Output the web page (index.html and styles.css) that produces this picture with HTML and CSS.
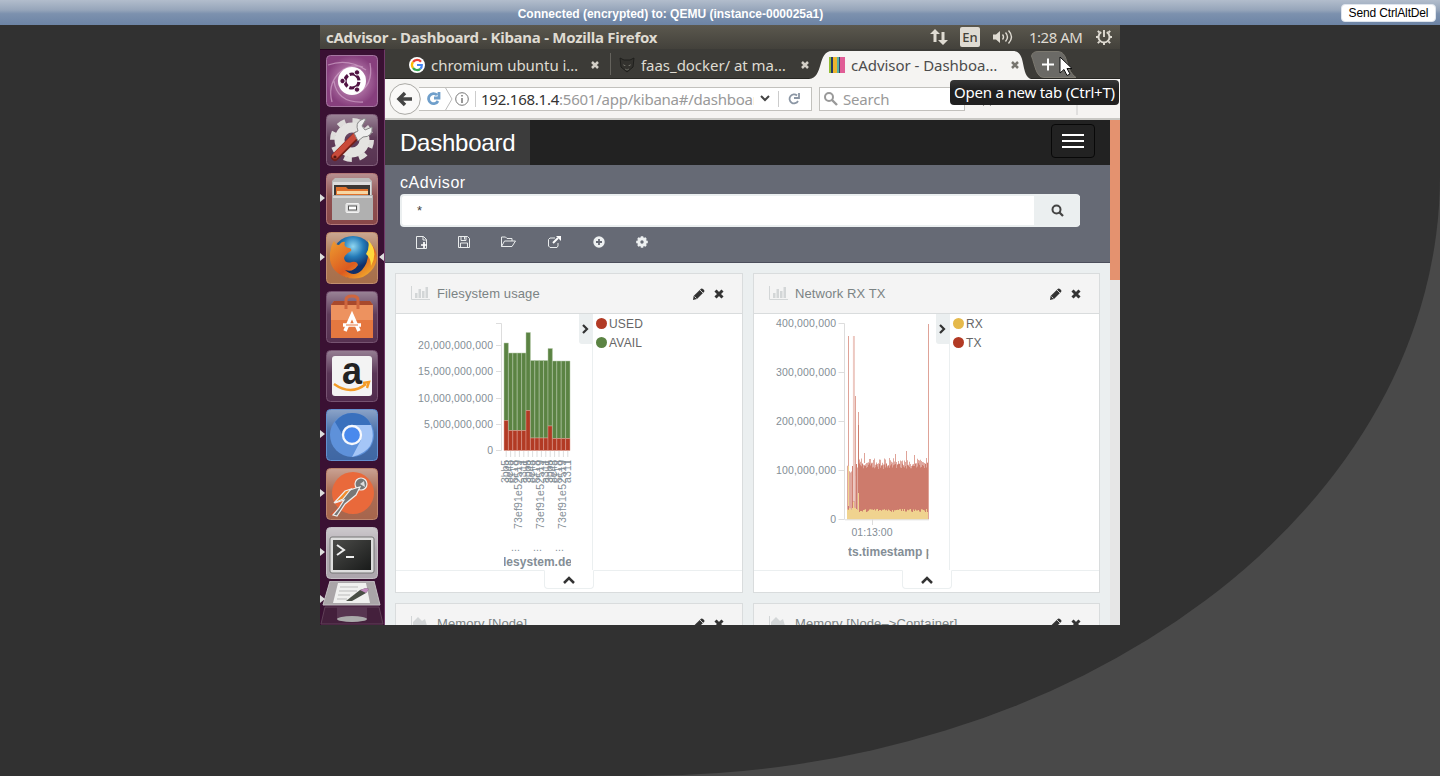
FILE: index.html
```html
<!DOCTYPE html>
<html lang="en">
<head>
<meta charset="utf-8">
<title>QEMU (instance-000025a1)</title>
<link rel="stylesheet" href="styles.css">
</head>
<body>
<header class="vnc-bar"><span class="vnc-status">Connected (encrypted) to: QEMU (instance-000025a1)</span><button class="vnc-button">Send CtrlAltDel</button></header>
<main class="vnc-screen">
<div class="desktop">
  <div class="panel-bar">
    <span class="window-title ubuntu">cAdvisor - Dashboard - Kibana - Mozilla Firefox</span>
    <svg class="net" width="18" height="18" viewBox="0 0 18 18"><path d="M0 6 5 1l5 5H6.500v8h-3V6zM8 12h3.500V4h3v8H18l-5 5z" fill="#dfdbd2"/></svg>
    <span class="lang ubuntu">En</span>
    <svg class="vol" width="20" height="16" viewBox="0 0 20 16"><path d="M0 5.500h3l4-3.500v12l-4-3.500H0z" fill="#dfdbd2"/><path d="M9.500 5.500q2 2.500 0 5M12.500 3.500q4 4.500 0 9M15.500 1.500q6 6.500 0 13" fill="none" stroke="#dfdbd2" stroke-width="1.4"/></svg>
    <span class="clock ubuntu">1:28 AM</span>
    <svg class="cog" width="18" height="18" viewBox="0 0 18 18"><path d="M6.300 4.200a5.500 5.500 0 1 0 5.400 0" fill="none" stroke="#dfdbd2" stroke-width="1.900"/><path d="M9 2v7M4.500 4.500 2.800 2.800M13.500 4.500l1.700-1.700M3.200 9H1M14.800 9H17M4.700 13.300l-1.900 1.900M13.300 13.300l1.900 1.900M9 14.500V17" stroke="#dfdbd2" stroke-width="1.900"/></svg>
  </div>
  <div class="workspace">
    <nav class="launcher">
      <svg viewBox="0 0 64 52" class="app"><defs><linearGradient id="gloss" x2="0" y2="1"><stop stop-color="#fff" stop-opacity=".42"/><stop offset=".45" stop-color="#fff" stop-opacity=".1"/><stop offset="1" stop-color="#fff" stop-opacity=".05"/></linearGradient><radialGradient id="swirl"><stop stop-color="#d3a3c9"/><stop offset="1" stop-color="#873f7d"/></radialGradient></defs><rect x="6.5" y=".5" width="51" height="51" rx="4" fill="url(#swirl)" stroke="#a576a0"/><path d="M12 47C6 25 24 6 43 12M14 26q3 22 29 21M50 8q4 23-14 31M8 10q20-7 38 5" fill="none" stroke="#d6aace" stroke-width="1.3" opacity=".65"/><circle cx="32" cy="26" r="14" fill="#fff"/><circle cx="32" cy="26" r="7" fill="none" stroke="#511343" stroke-width="3.2" stroke-dasharray="12.7 2" stroke-dashoffset="-1"/><g fill="#511343" stroke="#fff"><circle cx="22.5" cy="26" r="2.7"/><circle cx="37" cy="17.4" r="2.7"/><circle cx="37" cy="34.6" r="2.7"/></g></svg>
      <svg viewBox="0 0 64 52" class="app"><rect x="6.5" y=".5" width="51" height="51" rx="4" fill="#4f2848" stroke="#83617c"/><rect x="7" y="1" width="50" height="50" rx="4" fill="url(#gloss)"/><circle cx="32" cy="26" r="19.5" fill="none" stroke="#dedddb" stroke-width="5" stroke-dasharray="8 7.3"/><circle cx="32" cy="26" r="12.5" fill="none" stroke="#e4e3e1" stroke-width="10"/><path d="m15 43 21-21" stroke="#741f19" stroke-width="8" stroke-linecap="round"/><path d="m15 42 20-20" stroke="#c94a3a" stroke-width="6" stroke-linecap="round"/><path d="m34 19 4-2q-3-8 3-11 3-2 5-1l-4 7 3 4 7-3q1 10-9 10l-5 4z" fill="#eee" stroke="#888"/><circle cx="15" cy="43" r="1.6" fill="#551710"/></svg>
      <svg viewBox="0 0 64 52" class="app"><rect x="6.5" y=".5" width="51" height="51" rx="4" fill="#823e3f" stroke="#b37879"/><rect x="7" y="1" width="50" height="50" rx="4" fill="url(#gloss)"/><path d="m12 8 3-3h34l3 3v15H12z" fill="#bbb"/><path d="M13 9h38v13H13z" fill="#ddd"/><path d="M14 12h36v10H14z" fill="#3c3835"/><path d="M16 14h10l2 2h20v7H16z" fill="#df712c"/><path d="M17 18h31v3H17z" fill="#f7d6a3"/><path d="M12 22h41v25H12z" fill="#b0b0b0"/><path d="M13 23h39v2H13z" fill="#d6d6d6"/><rect x="26" y="30.5" width="13" height="9" rx="1" fill="#ddd" stroke="#f2f2f2"/><rect x="28.5" y="33" width="8" height="4" fill="#fff" stroke="#555"/><path d="m0 21 5 4-5 4z" fill="#ddd"/></svg>
      <svg viewBox="0 0 64 52" class="app"><defs><radialGradient id="globe" cy=".25"><stop stop-color="#90d7f1"/><stop offset=".5" stop-color="#247bb8"/><stop offset="1" stop-color="#112f69"/></radialGradient><linearGradient id="fox" x2="1" y2="1"><stop stop-color="#ed9c30"/><stop offset=".55" stop-color="#dc5b20"/><stop offset="1" stop-color="#f8c52f"/></linearGradient></defs><rect x="6.5" y=".5" width="51" height="51" rx="4" fill="#a36741" stroke="#c28e6e"/><rect x="7" y="1" width="50" height="50" rx="4" fill="url(#gloss)"/><circle cx="33" cy="25" r="21" fill="url(#globe)"/><path d="M14 9q2 4 5 4 3-4 6-3-2 5 4 6 3 0 2 3-6 3-7 7 1 6 8 4 5-1 6 3-5 8-13 5 9 8 17 0 7-8 6-19l3 5 1-11q10 13-1 26-10 11-26 6Q8 38 10 21q1-8 4-12" fill="url(#fox)"/><path d="M48 8q11 11 3 26 0-8-5-12 4-6 2-14" fill="#ffd83c"/><path d="m0 21 5 4-5 4zM64 21l-5 4 5 4z" fill="#ddd"/></svg>
      <svg viewBox="0 0 64 52" class="app"><rect x="6.5" y=".5" width="51" height="51" rx="4" fill="#4e2748" stroke="#765371"/><rect x="7" y="1" width="50" height="50" rx="4" fill="url(#gloss)"/><path d="m11 14 3-4h36l3 4v33H11z" fill="#e57840"/><path d="m11 14 3-4h36l3 4z" fill="#a8492c"/><path d="M11 14h42v15H11z" fill="#ed925f"/><path d="M26 18V9q0-4 6-4t6 4v9" fill="none" stroke="#cf663e" stroke-width="3"/><path d="m25 40 7-16 7 16M23 34h18" fill="none" stroke="#fff" stroke-width="3.5"/><path d="M26 34h12" stroke="#e57840"/></svg>
      <svg viewBox="0 0 64 52" class="app"><rect x="6.5" y=".5" width="51" height="51" rx="4" fill="#482044" stroke="#765371"/><rect x="7" y="1" width="50" height="50" rx="4" fill="url(#gloss)"/><rect x="12" y="6" width="40" height="40" rx="3" fill="#f3f3f3"/><text x="22" y="33.500" class="amazon" textLength="20" lengthAdjust="spacingAndGlyphs">a</text><path d="M14 34q17 12 32 0M43 33l6-1-2 6" fill="none" stroke="#f39b27" stroke-width="2.4"/></svg>
      <svg viewBox="0 0 64 52" class="app"><rect x="6.5" y=".5" width="51" height="51" rx="4" fill="#355f9f" stroke="#6390cf"/><rect x="7" y="1" width="50" height="50" rx="4" fill="url(#gloss)"/><circle cx="32" cy="26" r="22" fill="#5e91da"/><path d="M32 16h19q8 25-19 32l9-17z" fill="#a5c6f7"/><path d="M15 13q7-9 17-9 14 0 19 12H32q-9 0-10 9z" fill="#3970bd"/><circle cx="32" cy="26" r="9" fill="#4989ed" stroke="#f6f8fc" stroke-width="2.3"/><path d="m0 21 5 4-5 4z" fill="#ddd"/></svg>
      <svg viewBox="0 0 64 52" class="app"><rect x="6.5" y=".5" width="51" height="51" rx="4" fill="#a25d43" stroke="#bd866f"/><rect x="7" y="1" width="50" height="50" rx="4" fill="url(#gloss)"/><circle cx="33" cy="25" r="21" fill="#e9693b"/><path d="m10 47 10-9-3 8z" fill="#d95834"/><g stroke="#eee" stroke-width="1.2"><circle cx="41" cy="16" r="6" fill="#777"/><path d="m36 20-9 3-12 12 9-3-5 8-6 7 4 1 8-12 11-9 4-8z" fill="#777"/><path d="m31 21-6 2-11 12 9-4z" fill="#f28c2c"/></g><path d="m40 16 4-3 1 6z" fill="#ddd"/><path d="m0 21 5 4-5 4z" fill="#ddd"/></svg>
      <svg viewBox="0 0 64 52" class="app"><defs><linearGradient id="term" x2="1" y2="1"><stop stop-color="#4b4b49"/><stop offset="1" stop-color="#191b1a"/></linearGradient></defs><rect x="6.5" y=".5" width="51" height="51" rx="4" fill="#a8a1a8" stroke="#c5bfc5"/><rect x="7" y="1" width="50" height="50" rx="4" fill="url(#gloss)"/><rect x="10" y="10" width="44" height="36" rx="2" fill="#ddd" stroke="#777"/><path d="M13 13h38v30H13z" fill="url(#term)"/><path d="m17 18 7 5-7 5M26 30h8" fill="none" stroke="#eee" stroke-width="2"/><path d="m0 21 5 4-5 4z" fill="#ddd"/></svg>
      <svg viewBox="0 0 64 44" class="app-fold"><path d="M10 0h44l6 24H3z" fill="#aaa5a8" stroke="#c4bec3"/><path d="M18 2h28l4 20H13z" fill="#f0f0ef"/><path d="M20 6h18M19 10h18M18 14h12M17 18h10" stroke="#bbb"/><path d="m26 20 14-11 6-2 3 1-3 4-14 8z" fill="#494e45"/><path d="m40 9 6-2 3 1-3 4z" fill="#c28bbf"/><path d="m5 26-4 17h62l-4-17z" fill="#44203c" stroke="#604058"/><path d="M17 26v12q15 6 30 0V26" fill="#573550"/><ellipse cx="32" cy="38" rx="15" ry="3" fill="#aaa"/><path d="m0 14 5 4-5 4z" fill="#ddd"/></svg>
    </nav>
    <section class="browser">
      <div class="tabs ubuntu">
        <div class="tab first"><svg width="16" height="16" viewBox="0 0 16 16"><circle cx="8" cy="8" r="8" fill="#fff"/><g fill="none" stroke-width="2.2"><path d="M12 4.8A5 5 0 0 0 4 5" stroke="#ea4335"/><path d="M4 5a5 5 0 0 0 0 6" stroke="#fbbc05"/><path d="M4 11a5 5 0 0 0 7.3.8" stroke="#34a853"/><path d="M11.3 11.8q1.6-1.5 1.5-3.8H8" stroke="#4285f4"/></g></svg><span class="label l1">chromium ubuntu i…</span><svg class="x" width="8" height="8" viewBox="0 0 8 8"><path d="m1 1 6 6m0-6L1 7"/></svg></div>
        <div class="tab second"><svg width="16" height="16" viewBox="0 0 16 16"><path d="m1 1 4 2h6l4-2-1 9-6 5-6-5z" fill="#33322e" stroke="#1f1f1c"/><path d="m4 7 3 2H5zM12 7 9 9h2z" fill="#77776f"/><path d="m6 12 2 1 2-1" stroke="#66665f" fill="none"/></svg><span class="label l2">faas_docker/ at ma…</span><svg class="x" width="8" height="8" viewBox="0 0 8 8"><path d="m1 1 6 6m0-6L1 7"/></svg></div>
        <div class="tab active"><svg class="tab-shape" width="220" height="29" viewBox="0 0 220 29"><path d="M-6 28C9 27 2 0 17 0h181c14 0 7 24 18 28v1H-6z" fill="#f5f4f2"/></svg><svg width="16" height="16" viewBox="0 0 16 16"><path d="M0 0h2v16H0z" fill="#94bd32"/><path d="M2 0h2v16H2z" fill="#253b66"/><path d="M4 0h4v16H4z" fill="#ecb52e"/><path d="M8 0h2v16H8z" fill="#57b2a2"/><path d="M10 0h1v16h-1z" fill="#393d62"/><path d="M11 0h5v16h-5z" fill="#e05d96"/></svg><span class="label l3">cAdvisor - Dashboa…</span><svg class="x" width="8" height="8" viewBox="0 0 8 8"><path d="m1 1 6 6m0-6L1 7"/></svg></div>
        <svg class="plus" width="46" height="27" viewBox="0 0 46 27"><path d="M.5 5Q1.500.5 7 .5h19c6 0 8 4 9.500 9q3 13 9.500 17H13C5 26.500 4 14 .5 5" fill="#6b6a66" stroke="#7b786f"/><path d="M17 7.500v12m-6-6h12" stroke="#fff" stroke-width="2"/></svg>
      </div>
      <div class="toolbar ubuntu">
        <svg class="back" width="34" height="34" viewBox="0 0 34 34"><circle cx="16" cy="17" r="15.3" fill="#faf9f8" stroke="#aaa9a5"/><path d="m16 11-6 6 6 6M11 17h12" fill="none" stroke="#444" stroke-width="3.500"/></svg>
        <div class="url"><svg class="reload-id" width="14" height="14" viewBox="0 0 14 14"><path d="M11 9A5 5 0 1 1 10 3M12 0v6H7" fill="none" stroke="#6f9fcb" stroke-width="2.8"/></svg><svg class="chev" width="8" height="24" viewBox="0 0 8 24"><path d="m0 0 7 12-7 12" fill="none" stroke="#bbb"/></svg><svg width="14" height="14" viewBox="0 0 14 14"><circle cx="7" cy="7" r="6.3" fill="none" stroke="#777"/><path d="M7 6v5M7 3v1.6" stroke="#777" stroke-width="1.5"/></svg><i class="sep s1"></i><span class="address"><b>192.168.1.4</b>:5601/app/kibana#/dashboard</span><svg class="drop" width="10" height="7" viewBox="0 0 10 7"><path d="m1 1 4 4 4-4" fill="none" stroke="#444" stroke-width="2"/></svg><i class="sep s2"></i><svg class="refresh" width="12" height="12" viewBox="0 0 12 12"><path d="M10 8A4.5 4.5 0 1 1 9 2.5M11 0v5H6" fill="none" stroke="#8b96a4" stroke-width="1.8"/></svg></div>
        <div class="search"><svg width="14" height="14" viewBox="0 0 14 14"><circle cx="5" cy="5" r="4" fill="none" stroke="#999" stroke-width="2"/><path d="m8 8 5 5" stroke="#999" stroke-width="2.4"/></svg><span>Search</span></div>
        <svg class="toolbar-icons" width="130" height="32" viewBox="0 0 130 32"><path d="m21 9 2 5 5 .5-4 3.500 1 5-4-3-4 3 1-5-4-3.500 5-.5z" fill="#4d4d4d"/><path d="M36 8v14M111 4v28" stroke="#ccc"/><path d="M46 10h12v11H46z" fill="#444"/></svg>
      </div>
      <div class="page"><div class="kibana">
        <div class="navbar"><span class="brand">Dashboard</span><span class="burger"><i></i><i></i><i></i></span></div>
        <div class="query"><h1>cAdvisor</h1><div class="query-box"><span class="query-text">*</span><span class="query-go"><svg width="13" height="13" viewBox="0 0 13 13"><circle cx="5.5" cy="5.500" r="4" fill="none" stroke="#444" stroke-width="2"/><path d="m8.500 8.500 3.500 3.500" stroke="#444" stroke-width="2.3"/></svg></span></div>
          <div class="actions">
            <svg class="a1" width="12" height="13" viewBox="0 0 12 13"><path d="M.5.5h7l3 3v9H.5zM7 .5v3.500h3.500" fill="none" stroke="#e9eced"/><path d="M8 6v6M5 9h6" stroke="#fff" stroke-width="1.7"/></svg>
            <svg class="a2" width="12" height="12" viewBox="0 0 12 12"><path d="M.5.5h9l2 2v9H.5zM3 .5v4h5v-4M2.500 11.500V7h7v4.500M6.500 1v2.500" fill="none" stroke="#e9eced"/></svg>
            <svg class="a3" width="15" height="12" viewBox="0 0 15 12"><path d="M.5 10.500V1h4l1.500 1.500h5V5M.5 10.500 3.500 5h11L11 10.500z" fill="none" stroke="#e9eced"/></svg>
            <svg class="a4" width="13" height="13" viewBox="0 0 13 13"><path d="M7 2H2L.5 3.500V10L2 11.500h7l1-1.500V7" fill="none" stroke="#e9eced"/><path d="m5 7 5-5" stroke="#fff" stroke-width="2"/><path d="M8 0h5v5z" fill="#fff"/></svg>
            <svg class="a5" width="12" height="12" viewBox="0 0 12 12"><circle cx="6" cy="6" r="5.700" fill="#edf0f1"/><path d="M6 3v6M3 6h6" stroke="#666a75" stroke-width="1.800"/></svg>
            <svg class="a6" width="12" height="12" viewBox="0 0 12 12"><circle cx="6" cy="6" r="3.200" fill="none" stroke="#edf0f1" stroke-width="3"/><path d="M6 .2v2M6 9.800v2M.2 6h2M9.800 6h2M2 2l1.300 1.300M8.700 8.700 10 10M2 10l1.300-1.300M8.700 3.300 10 2" stroke="#edf0f1" stroke-width="2.500"/></svg>
          </div></div>
        <div class="grid" id="grid"></div>
      </div><div class="scroll"><i></i></div></div>
    </section>
  </div>
  <div class="tooltip ubuntu">Open a new tab (Ctrl+T)</div>
  <svg class="cursor" width="14" height="21" viewBox="0 0 14 21"><path d="M1 1v16l4-3.500 3 6 3-1.500-3-5.500h5z" fill="#fff" stroke="#111"/></svg>
</div>
</main>
<script src="charts.js"></script>
</body>
</html>
```
FILE: styles.css
```css
* { box-sizing: border-box; }
body { margin: 0; height: 776px; overflow: hidden; background: #494949; font-family: "Liberation Sans", Arial, sans-serif; }
svg { display: block; flex: none; }
.ubuntu { font-family: "Noto Sans", "Open Sans", sans-serif; }
.vnc-bar { height: 25px; background: linear-gradient(#b2bdcc 0%, #96a5ba 40%, #7c91ae 55%, #6d84a5 100%); display: flex; align-items: center; }
.vnc-status { flex: 1; padding: 2px 0 0 0; text-align: center; font-size: 12px; font-weight: bold; color: #fff; letter-spacing: -.01px; white-space: nowrap; }
.vnc-button { margin-right: 4px; width: 95px; height: 18px; padding: 0; border: 1px solid #dfe5ed; border-radius: 4px; background: #fff; color: #000; font: 12px "Liberation Sans", sans-serif; letter-spacing: -.15px; white-space: nowrap; }
.vnc-screen { height: 751px; background: #313131; border-bottom-right-radius: 800px 600px; display: flex; justify-content: center; align-items: flex-start; }
.desktop { width: 800px; height: 600px; position: relative; overflow: hidden; background: #3c3b37; }
.panel-bar { height: 24px; padding: 0 7px 0 6px; display: flex; align-items: center; background: linear-gradient(#5b584e, #43413b); color: #dfdbd2; }
.window-title { width: 333px; font-size: 15px; line-height: 20px; padding-bottom: 1px; font-weight: bold; letter-spacing: -.26px; white-space: nowrap; }
.net { margin-left: 271px; }
.lang { margin-left: 12px; width: 20px; height: 20px; border-radius: 2px; background: #dfdbd2; color: #454239; font-size: 13px; line-height: 20px; text-align: center; font-weight: 500; }
.vol { margin-left: 13px; }
.clock { margin-left: 16px; width: 54px; font-size: 15px; line-height: 20px; padding-bottom: 1px; letter-spacing: -.5px; white-space: nowrap; }
.cog { margin-left: 12px; }
.workspace { display: flex; height: 576px; }
.launcher { width: 65px; flex: none; padding-top: 5px; display: flex; flex-direction: column; gap: 7px; background: #3a1133; border-right: 1px solid #713a69; border-top: 1px solid #26071f; }
.app { width: 64px; height: 52px; }
.app-fold { width: 64px; height: 44px; margin-top: -5px; }
.amazon { font: bold 38px "Liberation Sans", sans-serif; fill: #222; }
.browser { width: 735px; flex: none; display: flex; flex-direction: column; }
.tabs { height: 30px; display: flex; position: relative; background: #3c3b37; border-bottom: 1px solid #282824; color: #dfdbd2; font-size: 15px; }
.tab { display: flex; align-items: center; height: 31px; position: relative; white-space: nowrap; }
.first { width: 225px; padding-left: 24px; }
.second { width: 210px; padding-left: 9px; }
.second::before { content: ""; position: absolute; left: 0; top: 4px; height: 22px; width: 1px; background: #65635d; }
.active { width: 220px; margin-left: -5px; padding-left: 14px; color: #4c4c4c; }
.active > * { position: relative; }
.tab .tab-shape { position: absolute; left: 0; top: 2px; overflow: visible; }
.label { margin-left: 6px; width: 156px; display: block; overflow: hidden; letter-spacing: -.04px; }
.l1 { width: 160px; }
.x { fill: none; stroke: #d2cec6; stroke-width: 2.5; }
.second .x { margin-left: 4px; }
.active .x { margin-left: 4px; stroke: #77756f; }
.plus { position: absolute; left: 646px; top: 2px; }
.toolbar { height: 41px; background: #f5f4f2; border-bottom: 2px solid #c8c8c4; display: flex; align-items: center; }
.back { margin-left: 4px; z-index: 1; }
.url { width: 393px; height: 24px; margin-left: -4px; border: 1px solid #c2c1bd; border-left: 0; display: flex; align-items: center; background: #fff; overflow: hidden; }
.reload-id { margin-left: 8px; }
.chev { margin: 0 2px 0 4px; }
.sep { width: 1px; height: 16px; background: #ccc; flex: none; }
.s1 { margin-left: 6px; }
.address { width: 273px; flex: none; margin-left: 5px; overflow: hidden; color: #999; font-size: 15px; line-height: 22px; letter-spacing: -.24px; white-space: nowrap; }
.address b { font-weight: 400; color: #333; }
.drop { margin-left: 6px; }
.s2 { margin-left: 8px; }
.refresh { margin-left: 9px; }
.search { width: 146px; height: 24px; margin-left: 7px; padding-left: 4px; display: flex; align-items: center; gap: 5px; background: #fff; border: 1px solid #c2c1bd; color: #999; font-size: 15px; line-height: 22px; letter-spacing: -.2px; }
.toolbar-icons { margin-left: 1px; }
.page { height: 505px; display: flex; }
.kibana { width: 725px; height: 505px; overflow: hidden; background: #ebeff0; }
.navbar { height: 45px; display: flex; justify-content: space-between; background: #222; }
.brand { width: 145px; padding-left: 15px; background: #3c3c3c; color: #fff; font-size: 24px; line-height: 45px; letter-spacing: -.24px; white-space: nowrap; }
.burger { width: 44px; height: 34px; margin: 4px 15px 0 0; border: 1px solid #080808; border-radius: 4px; display: flex; flex-direction: column; align-items: center; gap: 4px; padding-top: 9px; }
.burger i { width: 22px; height: 2px; background: #fff; }
.query { height: 98px; padding: 9px 30px 0 15px; background: #666a75; border-bottom: 1px solid #4b4e5b; }
.query h1 { margin: 0 0 3px; height: 17px; font-size: 16px; font-weight: 400; line-height: 17px; letter-spacing: .55px; color: #fff; }
.query-box { height: 33px; display: flex; justify-content: space-between; border: 2px solid #ebeff0; border-width: 2px 0 2px 2px; border-radius: 4px; background: #fff; }
.query-text { padding: 7px 0 0 15px; font-size: 13px; line-height: 15px; color: #444; }
.query-go { width: 46px; background: #ebeff0; display: grid; place-items: center; }
.actions { display: flex; align-items: center; height: 30px; padding-left: 16px; }
.a2 { margin-left: 30px; }
.a3 { margin-left: 31px; }
.a4 { margin-left: 32px; }
.a5 { margin-left: 32px; }
.a6 { margin-left: 31px; }
.grid { display: grid; grid-template-columns: 348px 347px; gap: 10px; padding: 10px; }
.card { height: 320px; background: #fff; border: 1px solid #d9dcdd; }
.card-head { height: 40px; background: #f4f4f4; border-bottom: 1px solid #d9dcdd; padding: 0 18px 0 15px; display: flex; align-items: center; color: #7b8384; font-size: 13px; letter-spacing: .1px; white-space: nowrap; }
.card-head span { flex: 1; margin-left: 7px; }
.card-head .close { margin-left: 9px; }
.card-body { height: 257px; display: flex; border-bottom: 1px solid #ebeff0; }
.plot { width: 197px; height: 256px; border-right: 1px solid #ebeff0; position: relative; }
.plot.narrow { width: 196px; }
.toggle { position: absolute; right: 0; top: 0; width: 13px; height: 30px; background: #ebeff0; display: grid; place-items: center; border-bottom-left-radius: 3px; }
.legend { padding: 0 0 0 3px; font-size: 12px; color: #666; }
.legend div { height: 19px; display: flex; align-items: center; gap: 2px; letter-spacing: .2px; }
.dot { width: 11px; height: 11px; border-radius: 50%; }
.red { background: #b23a24; }
.green { background: #5b8343; }
.gold { background: #e5b94b; }
.spy { width: 50px; height: 19px; margin: -1px 0 0 148px; border: 1px solid #ebeff0; border-top-color: #fff; border-radius: 0 0 4px 4px; background: #fff; display: grid; place-items: center; }
.plot text { font-family: "Liberation Sans", sans-serif; font-size: 10.5px; fill: #848e96; }
.plot .title { font-size: 12px; font-weight: bold; }
.axis { fill: none; stroke: #ddd; }
.tooltip { position: absolute; left: 630px; top: 55px; width: 169px; height: 25px; border-radius: 4px; background: linear-gradient(#373737, #202020 40%); color: #fff; text-align: center; font-size: 15px; line-height: 25px; letter-spacing: -.22px; white-space: nowrap; }
.cursor { position: absolute; left: 739px; top: 31px; }
.scroll { width: 10px; height: 505px; background: #e6e6e6; }
.scroll i { display: block; height: 160px; background: #e4926f; }
```
FILE: charts.js
```js
const pencil = '<svg width="12" height="12" viewBox="0 0 12 12"><path d="m0 12 .6-4L8 .7Q9 0 10 1l1 1q1 1 0 2L4 11z" fill="#333"/><path d="m7 2 3 3M1.500 8.500l2 2" stroke="#f4f4f4" stroke-width=".8"/></svg>';
const close = '<svg class="close" width="10" height="10" viewBox="0 0 10 10"><path d="m1.500 1.500 7 7m0-7-7 7" stroke="#333" stroke-width="3"/></svg>';
const barIcon = '<svg width="19" height="15" viewBox="0 0 19 15"><path d="M.5 0v13.500H19" fill="none" stroke="#d3d6d7"/><path d="M4 7h2.500v5H4zM7.500 3H10v9H7.500zM11 5h2.500v7H11zM14.500 1H17v11h-2.500z" fill="#d3d6d7"/></svg>';
const areaIcon = '<svg width="19" height="15" viewBox="0 0 19 15"><path d="M.5 0v13.500H19" fill="none" stroke="#d3d6d7"/><path d="M2 13V6l5-5 4 4 3-2 3 10z" fill="#d3d6d7"/></svg>';
const head = (title, icon) => `<div class="card-head">${icon}<span>${title}</span>${pencil}${close}</div>`;
const toggle = '<div class="toggle"><svg width="7" height="10" viewBox="0 0 7 10"><path d="m1 1 4 4-4 4" fill="none" stroke="#333" stroke-width="2.2"/></svg></div>';
const spy = '<div class="spy"><svg width="12" height="8" viewBox="0 0 12 8"><path d="m1 7 5-5 5 5" fill="none" stroke="#333" stroke-width="2.5"/></svg></div>';

function filesystemChart() {
  const bars = [[343, 420.5], [353, 430.5], [353, 430.5], [353, 430.5], [353, 430.5], [332.5, 410.5], [360.5, 438], [360.5, 438], [360.5, 438], [360.5, 438], [348.5, 426], [361, 438.5], [361, 438.5], [361, 438.5], [361, 438.5]];
  const names = ['3bb5', '8e48', '5f18', '73ef91e52519', 'a311'];
  let s = '<path class="axis" d="M496 323.500h5.500v127H496M496 345.500h5M496 371.500h5M496 398.500h5M496 424.500h5"/>';
  [['20,000,000,000', 349, 75], ['15,000,000,000', 375, 75], ['10,000,000,000', 401.500, 75], ['5,000,000,000', 428, 69], ['0', 454, 6]].forEach(l => {
    s += `<text x="493" y="${l[1]}" text-anchor="end" textLength="${l[2]}">${l[0]}</text>`;
  });
  bars.forEach(([top, mid], i) => {
    const x = 504 + i * 4.4;
    s += `<path d="M${x} ${top}h4.400V${mid}h-4.400z" fill="#5b8343" stroke="#b4c9a8" stroke-width=".5"/><path d="M${x} ${mid}h4.400V450.500h-4.400z" fill="#b23a24" stroke="#dc9c90" stroke-width=".5"/><path class="axis" d="M${x + 2.2} 451v6"/>`;
    const name = names[i % 5];
    s += `<text transform="translate(${x + (i % 5 === 3 ? 4.6 : 5)} 460) rotate(-90)" text-anchor="end" textLength="${i % 5 === 3 ? 69 : 23}">${name}</text>`;
  });
  s += '<path d="M504 461.500h67" stroke="#848e96" stroke-width=".8"/>';
  [511, 533, 555].forEach(x => { s += `<text x="${x}" y="551" textLength="9">...</text>`; });
  s += '<svg x="504" y="552" width="67" height="18" viewBox="504 552 67 18"><text class="title" x="503" y="566" textLength="69">lesystem.de</text></svg>';
  return `<svg width="196" height="256" viewBox="396 314 196 256">${s}</svg>`;
}

function networkChart() {
  let s = '<path class="axis" d="M838.500 323.500h6v196h-6M838.500 372.500h6M838.500 421.500h6M838.500 470.500h6M872.500 519v6"/>';
  [['400,000,000', 327], ['300,000,000', 376], ['200,000,000', 425], ['100,000,000', 474], ['0', 523]].forEach(l => {
    s += `<text x="836" y="${l[1]}" text-anchor="end"${l[0] === '0' ? '' : ' textLength="60"'}>${l[0]}</text>`;
  });
  let seed = 17;
  const noise = () => (seed = (seed * 73 + 41) % 1009) / 1009;
  const column = (x, top, bottom) => `M${x} ${top.toFixed(1)}H${x + 1}V${bottom}H${x}z`;
  let light = '', dark = '', gold = '';
  for (let x = 847; x < 929; x++) {
    const early = x < 858;
    const top = early ? 462 + noise() * 14 : 463 + noise() * 6;
    if (early && x % 4) light += column(x, top, 519);
    else dark += column(x, top, 519);
    if (!early) light += column(x, 458 + noise() * 8, 470);
    gold += column(x, (early ? 507 : 509) + noise() * 3, 519.5);
  }
  s += `<path d="${light}" fill="#e0a89f"/><path d="${dark}" fill="#cd7b6c"/><path d="${gold}" fill="#f0d38f"/>`;
  s += '<path d="M848.500 336v134M855.500 396v80M858.500 433v-21M864.500 453v10M895.500 454v10M906.500 451v12M914.500 455v10M928.500 324v195" stroke="#dfa398"/><path d="M858.500 425v85" stroke="#cc7c6c"/><path d="M853.900 336v165" stroke="#edc9c2" stroke-width="2"/><path d="M848.500 466v40M853.500 502v17M858.500 493v20" stroke="#f0d38f"/><path class="axis" d="M845 519.800h84"/>';
  s += '<text x="851.500" y="536" textLength="41">01:13:00</text><svg x="848" y="543" width="80.500" height="18" viewBox="848 543 80.500 18"><text class="title" x="848" y="556" textLength="85">ts.timestamp p</text></svg>';
  return `<svg width="195" height="256" viewBox="754 314 195 256">${s}</svg>`;
}

const legend = rows => `<div class="legend">${rows.map(([c, t]) => `<div><i class="dot ${c}"></i>${t}</div>`).join('')}</div>`;
document.getElementById('grid').innerHTML =
  `<article class="card">${head('Filesystem usage', barIcon)}<div class="card-body"><div class="plot">${filesystemChart()}${toggle}</div>${legend([['red', 'USED'], ['green', 'AVAIL']])}</div>${spy}</article>` +
  `<article class="card">${head('Network RX TX', barIcon)}<div class="card-body"><div class="plot narrow">${networkChart()}${toggle}</div>${legend([['gold', 'RX'], ['red', 'TX']])}</div>${spy}</article>` +
  `<article class="card">${head('Memory [Node]', areaIcon)}</article><article class="card">${head('Memory [Node–&gt;Container]', areaIcon)}</article>`;
```
